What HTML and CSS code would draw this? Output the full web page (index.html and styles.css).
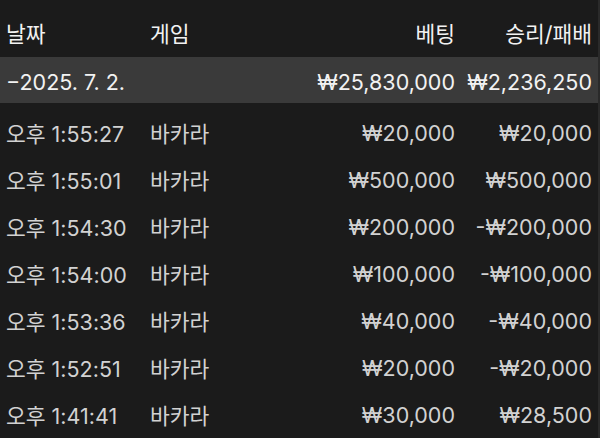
FILE: index.html
```html
<!DOCTYPE html>
<html lang="ko">
<head>
    <meta charset="UTF-8">
    <meta name="viewport" content="width=device-width, initial-scale=1.0">
    <title>베팅 내역</title>
    <link rel="stylesheet" href="styles.css">
</head>
<body>
    <div class="history">
        <div class="row head">
            <div>날짜</div>
            <div>게임</div>
            <div class="num">베팅</div>
            <div class="num">승리/패배</div>
        </div>
        <div class="row group">
            <div>−2025. 7. 2.</div>
            <div></div>
            <div class="num">₩25,830,000</div>
            <div class="num">₩2,236,250</div>
        </div>
        <div class="row item">
            <div>오후 1:55:27</div>
            <div>바카라</div>
            <div class="num">₩20,000</div>
            <div class="num">₩20,000</div>
        </div>
        <div class="row item">
            <div>오후 1:55:01</div>
            <div>바카라</div>
            <div class="num">₩500,000</div>
            <div class="num">₩500,000</div>
        </div>
        <div class="row item">
            <div>오후 1:54:30</div>
            <div>바카라</div>
            <div class="num">₩200,000</div>
            <div class="num">-₩200,000</div>
        </div>
        <div class="row item">
            <div>오후 1:54:00</div>
            <div>바카라</div>
            <div class="num">₩100,000</div>
            <div class="num">-₩100,000</div>
        </div>
        <div class="row item">
            <div>오후 1:53:36</div>
            <div>바카라</div>
            <div class="num">₩40,000</div>
            <div class="num">-₩40,000</div>
        </div>
        <div class="row item">
            <div>오후 1:52:51</div>
            <div>바카라</div>
            <div class="num">₩20,000</div>
            <div class="num">-₩20,000</div>
        </div>
        <div class="row item">
            <div>오후 1:41:41</div>
            <div>바카라</div>
            <div class="num">₩30,000</div>
            <div class="num">₩28,500</div>
        </div>
    </div>
</body>
</html>
```

FILE: styles.css
```css
body {
    margin: 0;
    background-color: #1b1b1b;
    font-family: Inter, "Noto Sans CJK KR", sans-serif;
    font-size: 21.5px;
    overflow: hidden;
}
.history {
    height: 438px;
    border-right: 2px solid #2a2a2a;
    box-sizing: border-box;
}
.row {
    display: grid;
    grid-template-columns: 144px 1fr 160px 137px;
    align-items: center;
    padding: 0 6px 0 6px;
    white-space: nowrap;
    box-sizing: border-box;
}
.num {
    text-align: right;
}
.head {
    height: 57px;
    color: #f2f2f2;
    padding-top: 17px;
    align-items: start;
}
.group {
    height: 46px;
    background-color: #3a3a3a;
    color: #f2f2f2;
    padding-top: 3px;
    margin-bottom: 6px;
}
.item {
    height: 47px;
    color: #d2d2d2;
}
```
